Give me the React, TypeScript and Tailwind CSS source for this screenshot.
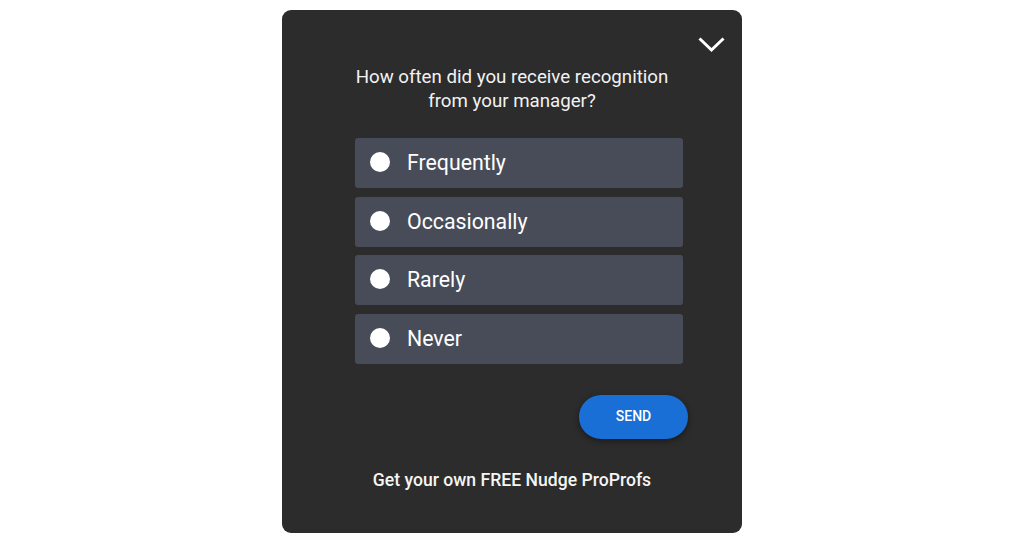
import { ChevronDown } from "lucide-react";

const options = ["Frequently", "Occasionally", "Rarely", "Never"];

export default function App() {
  return (
    <div className="min-h-[538px] w-full bg-white pt-[10px] font-['Roboto',sans-serif]">
      <div className="relative mx-auto h-[523px] w-[460px] rounded-[9px] bg-[#2c2c2c]">
        <button className="absolute right-[14px] top-[22px] text-white">
          <svg width="33" height="26" viewBox="0 0 33 26" fill="none">
            <path d="M4.5 6.5 L16.5 18 L28.5 6.5" stroke="white" strokeWidth="3" />
          </svg>
        </button>

        <div className="flex flex-col pt-[55px]">
          <p className="text-center text-[18.7px] leading-[24px] text-[#f2f2f2]">
            How often did you receive recognition
            <br />
            from your manager?
          </p>

          <div className="ml-[73px] mt-[25px] flex w-[328px] flex-col gap-[8.5px]">
            {options.map((o) => (
              <label
                key={o}
                className="flex h-[50px] cursor-pointer items-center rounded-[3px] bg-[#484c59] pl-[15px]"
              >
                <span className="-mt-[2px] h-[20px] w-[20px] rounded-full bg-white" />
                <span className="ml-[17px] text-[21.3px] leading-none text-white">{o}</span>
              </label>
            ))}
          </div>

          <div className="mt-[31px] flex justify-end pr-[54px]">
            <button className="h-[44px] w-[109px] rounded-full bg-[#1a6fd6] text-[14px] font-medium text-white shadow-[0_2px_6px_rgba(0,0,0,0.45)]">
              SEND
            </button>
          </div>

          <p className="mt-[29px] text-center text-[17.6px] font-medium leading-[24px] text-[#f5f5f5]">
            Get your own FREE Nudge ProProfs
          </p>
        </div>
      </div>
    </div>
  );
}
